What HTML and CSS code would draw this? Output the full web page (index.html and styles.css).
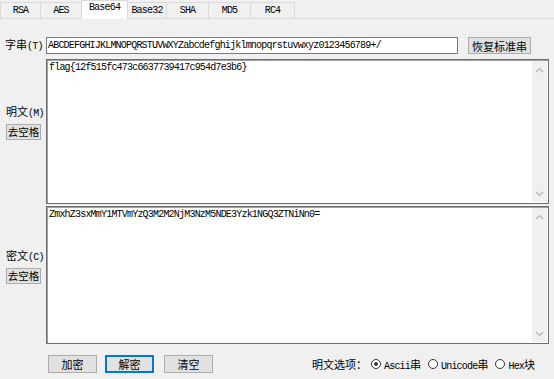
FILE: index.html
```html
<!DOCTYPE html>
<html lang="zh">
<head>
<meta charset="UTF-8" />
<title>Base64</title>
<link rel="stylesheet" href="styles.css">
</head>
<body>
<div class="tabs">
  <div class="tab w41">RSA</div>
  <div class="tab w42">AES</div>
  <div class="tab w47 active">Base64</div>
  <div class="tab w40">Base32</div>
  <div class="tab w43">SHA</div>
  <div class="tab w43">MD5</div>
  <div class="tab w45">RC4</div>
</div>

<div class="key-row">
  <label class="side-label">字串<span class="en">(T)</span></label>
  <div class="input en">ABCDEFGHIJKLMNOPQRSTUVWXYZabcdefghijklmnopqrstuvwxyz0123456789+/</div>
  <button class="btn btn-reset">恢复标准串</button>
</div>

<div class="pane pane-plain">
  <div class="side">
    <div class="side-label">明文<span class="en">(M)</span></div>
    <button class="btn btn-trim">去空格</button>
  </div>
  <div class="box">
    <div class="box-text en">flag{12f515fc473c6637739417c954d7e3b6}</div>
    <div class="scroll">
      <svg width="9" height="6" viewBox="0 0 9 6"><path d="M1 5 L4.5 1.5 L8 5" fill="none" stroke="#b4b4b4" stroke-width="1.2"/></svg>
      <svg width="9" height="6" viewBox="0 0 9 6"><path d="M1 1 L4.5 4.5 L8 1" fill="none" stroke="#b4b4b4" stroke-width="1.2"/></svg>
    </div>
  </div>
</div>

<div class="pane pane-cipher">
  <div class="side">
    <div class="side-label">密文<span class="en">(C)</span></div>
    <button class="btn btn-trim">去空格</button>
  </div>
  <div class="box">
    <div class="box-text en">ZmxhZ3sxMmY1MTVmYzQ3M2M2NjM3NzM5NDE3Yzk1NGQ3ZTNiNn0=</div>
    <div class="scroll">
      <svg width="9" height="6" viewBox="0 0 9 6"><path d="M1 5 L4.5 1.5 L8 5" fill="none" stroke="#b4b4b4" stroke-width="1.2"/></svg>
      <svg width="9" height="6" viewBox="0 0 9 6"><path d="M1 1 L4.5 4.5 L8 1" fill="none" stroke="#b4b4b4" stroke-width="1.2"/></svg>
    </div>
  </div>
</div>

<div class="bottom-row">
  <button class="btn btn-act">加密</button>
  <button class="btn btn-act focus">解密</button>
  <button class="btn btn-act">清空</button>
  <div class="options">
    <span class="opt-title">明文选项：</span>
    <span class="radio checked"></span><span class="opt"><span class="en">Ascii</span>串</span>
    <span class="radio"></span><span class="opt"><span class="en">Unicode</span>串</span>
    <span class="radio"></span><span class="opt"><span class="en">Hex</span>块</span>
  </div>
</div>
</body>
</html>
```

FILE: styles.css
```css
body {
  margin: 0;
  background-color: #f0f0f0;
  font-family: "Noto Sans CJK SC", sans-serif;
  font-size: 11px;
  color: #000;
  width: 554px;
  height: 379px;
  overflow: hidden;
}
.en {
  font-family: "Liberation Mono", monospace;
  font-size: 10px;
  letter-spacing: -0.8px;
}

/* tabs */
.tabs {
  display: flex;
  align-items: flex-end;
  height: 18px;
  border-bottom: 1px solid #d9d9d9;
}
.tab {
  box-sizing: border-box;
  height: 16px;
  border: 1px solid #d9d9d9;
  border-bottom: none;
  margin-right: -1px;
  background-color: #f0f0f0;
  font-family: "Liberation Mono", monospace;
  font-size: 10px;
  letter-spacing: -0.8px;
  text-align: center;
  line-height: 15px;
}
.tab.active {
  height: 19px;
  margin-bottom: -1px;
  background-color: #fff;
  position: relative;
  line-height: 14px;
}
.w40 { width: 40px; }
.w41 { width: 41px; }
.w42 { width: 42px; }
.w43 { width: 43px; }
.w45 { width: 45px; }
.w47 { width: 47px; }

/* key row */
.key-row {
  display: flex;
  align-items: center;
  margin-top: 18px;
  height: 17px;
}
.key-row .side-label {
  width: 41px;
  padding-left: 5px;
}
.side-label {
  white-space: nowrap;
  line-height: 12px;
}
.input {
  box-sizing: border-box;
  width: 412px;
  height: 17px;
  border: 1px solid #7a7a7a;
  background-color: #fff;
  padding-left: 1px;
  line-height: 15px;
  white-space: nowrap;
  overflow: hidden;
}
.btn {
  box-sizing: border-box;
  background-color: #e1e1e1;
  border: 1px solid #adadad;
  font-family: "Noto Sans CJK SC", sans-serif;
  font-size: 11px;
  color: #000;
  padding: 0;
  margin: 0;
  line-height: 14px;
}
.btn-reset {
  width: 63px;
  height: 17px;
  margin-left: 10px;
}

/* panes */
.pane {
  display: flex;
}
.pane-plain {
  margin-top: 5px;
  height: 145px;
}
.pane-cipher {
  margin-top: 2px;
  height: 138px;
}
.side {
  width: 46px;
  display: flex;
  flex-direction: column;
  justify-content: center;
  align-items: flex-start;
  gap: 4px;
  padding-bottom: 18px;
  box-sizing: border-box;
}
.side .side-label {
  margin-left: 6px;
}
.btn-trim {
  width: 35px;
  height: 16px;
  margin-left: 6px;
  font-size: 10.5px;
}
.box {
  box-sizing: border-box;
  width: 503px;
  border: 1px solid #6e6e6e;
  box-shadow: inset 1px 1px 0 #a0a0a0;
  background-color: #fff;
  display: flex;
}
.box-text {
  flex: 1;
  padding: 3px 0 0 2px;
  line-height: 10px;
  white-space: nowrap;
}
.scroll {
  width: 15px;
  margin: 1px 1px 1px 0;
  background-color: #f0f0f0;
  display: flex;
  flex-direction: column;
  justify-content: space-between;
  align-items: center;
  padding: 6px 0 5px;
}

/* bottom */
.bottom-row {
  display: flex;
  align-items: center;
  margin-top: 11px;
  padding-left: 48px;
  height: 18px;
}
.btn-act {
  width: 49px;
  height: 18px;
  margin-right: 8px;
}
.btn-act:nth-child(2) {
  margin-right: 10px;
}
.btn-act.focus {
  border-color: #0078d7;
  box-shadow: inset 0 0 0 1px #0078d7;
}
.options {
  display: flex;
  align-items: center;
  margin-left: 91px;
}
.opt-title {
  margin-right: 4px;
}
.radio {
  box-sizing: border-box;
  width: 10px;
  height: 10px;
  border: 1px solid #333;
  border-radius: 50%;
  background-color: #fff;
  display: flex;
  align-items: center;
  justify-content: center;
  margin-right: 3px;
}
.radio.checked::after {
  content: "";
  width: 4px;
  height: 4px;
  border-radius: 50%;
  background-color: #333;
}
.opt {
  margin-right: 7px;
}
```
